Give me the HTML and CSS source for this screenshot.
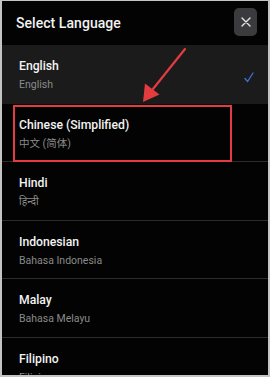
FILE: index.html
```html
<!DOCTYPE html>
<html lang="en">
<head>
<meta charset="utf-8">
<title>Select Language</title>
<link rel="stylesheet" href="styles.css">
</head>
<body>
<div class="screen">
  <div class="header">
    <div class="title">Select Language</div>
    <button class="close" aria-label="Close">
      <svg width="10" height="10" viewBox="0 0 10 10"><path d="M1 1L9 9M9 1L1 9" stroke="#e6e6e6" stroke-width="1.4" stroke-linecap="round" fill="none"/></svg>
    </button>
  </div>
  <div class="list">
    <div class="row selected">
      <div class="texts">
        <div class="name">English</div>
        <div class="native">English</div>
      </div>
      <svg class="check" width="10" height="11" viewBox="0 0 10 11"><path d="M1 6.5L3.6 9.5L9 1" stroke="#3f72d6" stroke-width="1.3" fill="none" stroke-linecap="round" stroke-linejoin="round"/></svg>
    </div>
    <div class="row">
      <div class="texts">
        <div class="name">Chinese (Simplified)</div>
        <div class="native">中文 (简体)</div>
      </div>
    </div>
    <div class="row">
      <div class="texts">
        <div class="name">Hindi</div>
        <div class="native">हिन्दी</div>
      </div>
    </div>
    <div class="row">
      <div class="texts">
        <div class="name">Indonesian</div>
        <div class="native">Bahasa Indonesia</div>
      </div>
    </div>
    <div class="row">
      <div class="texts">
        <div class="name">Malay</div>
        <div class="native">Bahasa Melayu</div>
      </div>
    </div>
    <div class="row">
      <div class="texts">
        <div class="name">Filipino</div>
        <div class="native">Filipino</div>
      </div>
    </div>
  </div>
  <svg class="annot" width="266" height="374" viewBox="0 0 266 374">
    <rect x="12" y="105" width="217" height="55" fill="none" stroke="#e23c3f" stroke-width="2"/>
    <line x1="183" y1="48" x2="151" y2="88" stroke="#e23c3f" stroke-width="2.2" stroke-linecap="round"/>
    <polygon points="141,101 143,82.5 157.5,93.5" fill="#e23c3f"/>
  </svg>
</div>
</body>
</html>
```
FILE: styles.css
```css
html, body {
  margin: 0;
  padding: 0;
}
body {
  background: #c4c4c4;
  width: 270px;
  height: 377px;
  overflow: hidden;
  font-family: Roboto, "Noto Sans", "Noto Sans CJK SC", "DejaVu Sans", sans-serif;
}
.screen {
  position: relative;
  margin: 1px 2px 0 2px;
  width: 266px;
  height: 374px;
  background: #030303;
  overflow: hidden;
}
.header {
  height: 44px;
  display: flex;
  align-items: center;
  justify-content: space-between;
  padding: 0 11px 0 14px;
}
.title {
  color: #f2f2f2;
  font-size: 14px;
  font-weight: 500;
  letter-spacing: 0.05px;
  margin-top: -1px;
}
.close {
  width: 23px;
  height: 28px;
  border: none;
  border-radius: 5px;
  background: #3b3b3d;
  padding: 0;
  display: flex;
  align-items: center;
  justify-content: center;
  margin-top: -2px;
}
.list {
  display: flex;
  flex-direction: column;
}
.row {
  height: 58.6px;
  box-sizing: border-box;
  border-bottom: 1px solid #2c2c2c;
  display: flex;
  align-items: flex-start;
  justify-content: space-between;
  padding: 13px 14px 0 17px;
}
.row.selected {
  background: #1b1b1c;
  border-bottom-color: #1b1b1c;
}
.texts {
  display: flex;
  flex-direction: column;
}
.name {
  color: #f3f3f3;
  font-size: 12.2px;
  font-weight: 500;
  line-height: 16px;
}
.native {
  color: #8a8a8a;
  font-size: 10.5px;
  line-height: 14px;
  margin-top: 4px;
  font-family: Roboto, "Noto Sans CJK SC", "Noto Sans Devanagari", "Lohit Devanagari", "FreeSans", sans-serif;
}
.check {
  margin-top: 14px;
}
.annot {
  position: absolute;
  left: 0;
  top: 0;
  pointer-events: none;
}
```
